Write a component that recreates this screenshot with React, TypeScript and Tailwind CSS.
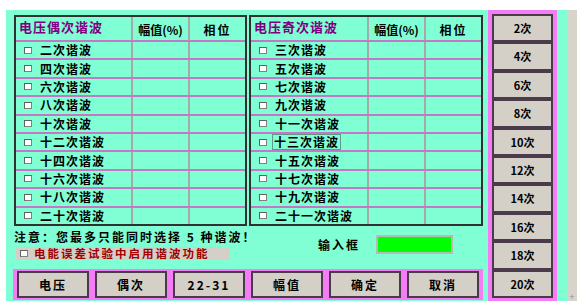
import React from 'react';

const evenRows = ['二次谐波', '四次谐波', '六次谐波', '八次谐波', '十次谐波', '十二次谐波', '十四次谐波', '十六次谐波', '十八次谐波', '二十次谐波'];
const oddRows = ['三次谐波', '五次谐波', '七次谐波', '九次谐波', '十一次谐波', '十三次谐波', '十五次谐波', '十七次谐波', '十九次谐波', '二十一次谐波'];
const sideButtons = ['2次', '4次', '6次', '8次', '10次', '12次', '14次', '16次', '18次', '20次'];
const bottomButtons = ['电压', '偶次', '22-31', '幅值', '确定', '取消'];

const Check = () => (
  <span className="inline-block w-[8px] h-[7px] bg-white border border-[#808080] border-t-[#606060] border-l-[#606060] shrink-0" />
);

const HarmonicTable = ({ title, rows, labelW, valW, focus }: { title: string; rows: string[]; labelW: string; valW: string; focus?: number }) => {
  return (
    <div className="h-[211px] border-2 border-[#303030] grid grid-rows-[23px_repeat(10,1fr)]">
      <div className="flex">
        <div className={`${labelW} pl-[3px] pt-[1px] text-[13px] font-bold text-[#800080] tracking-[1px] leading-[18px]`}>{title}</div>
        <div className={`${valW} border-l-2 border-[#a8a8a8] flex items-center justify-center pt-[3px] text-[12px] font-bold text-black`}>幅值(%)</div>
        <div className="flex-1 border-l-2 border-[#a8a8a8] flex items-center justify-center pt-[3px] text-[12px] font-bold text-black tracking-[2px]">相位</div>
      </div>
      {rows.map((r, i) => (
        <div key={r} className="flex border-t-2 border-[#c478c4]">
          <div className={`${labelW} flex items-center pl-[8px] gap-[8px]`}>
            <Check />
            <span className={`text-[12px] font-bold text-black tracking-[1px] leading-[14px] ${focus === i ? 'outline outline-1 outline-[#5f9a88] px-[1px] -ml-[2px]' : ''}`}>{r}</span>
          </div>
          <div className={`${valW} border-l-2 border-[#a8a8a8]`} />
          <div className="flex-1 border-l-2 border-[#a8a8a8]" />
        </div>
      ))}
    </div>
  );
};

const App = () => {
  return (
    <div className="w-[577px] h-[307px] bg-white flex pt-[10px] pl-[6px] overflow-hidden" style={{ fontFamily: '"Noto Sans CJK SC", "Liberation Sans", sans-serif' }}>
      <div className="w-[561px] h-[291px] bg-[#80ffd4] flex">
        <div className="w-[482px] pt-[5px] pl-[8px] flex flex-col">
          <div className="flex gap-[2px]">
            <div className="w-[233px]">
              <HarmonicTable title="电压偶次谐波" rows={evenRows} labelW="w-[115px]" valW="w-[57px]" />
            </div>
            <div className="w-[234px]">
              <HarmonicTable title="电压奇次谐波" rows={oddRows} labelW="w-[116px]" valW="w-[57px]" focus={5} />
            </div>
          </div>

          <div className="flex items-center mt-[3px]">
            <div className="w-[286px] flex flex-col">
              <div className="text-[12px] font-bold text-black tracking-[2px] leading-[16px] h-[16px] whitespace-nowrap">注意：您最多只能同时选择 5 种谐波！</div>
              <div className="mt-[2px] ml-[2px] w-[214px] h-[13px] bg-[#d4d0c8] flex items-center pl-[4px] gap-[6px]">
                <Check />
                <span className="text-[11.5px] font-bold text-[#a00000] tracking-[2px] leading-[13px] whitespace-nowrap">电能误差试验中启用谐波功能</span>
              </div>
            </div>
            <div className="ml-[18px] text-[12px] font-bold text-black tracking-[2px] leading-[14px]">输入框</div>
            <div className="ml-[16px] w-[77px] h-[19px] bg-[#00ff00] border-2 border-[#b8b8b8]" />
          </div>

          <div className="mt-[9px] -ml-[1px] w-[470px] h-[31px] bg-[#f47cf4] flex gap-[6px] pl-[4px] pt-[2px]">
            {bottomButtons.map(b => (
              <div key={b} className="w-[72px] h-[27px] bg-[#d4d0c8] border-2 border-[#4a3a4a] flex items-center justify-center text-[12px] font-bold text-black tracking-[2px]">{b}</div>
            ))}
          </div>
        </div>

        <div className="w-[69px] h-full bg-[#f47cf4] pl-[4px] pr-[4px] pt-[4px] pb-[3px] flex flex-col">
          {sideButtons.map(b => (
            <div key={b} className="flex-1 bg-[#d4d0c8] border-2 border-[#4a3a4a] flex items-center justify-center text-[11px] font-bold text-black">{b}</div>
          ))}
        </div>
      </div>
      <div className="w-[10px] h-[291px] bg-[#d8d4cc] flex items-end justify-center">
        <span className="text-[9px] text-[#909090] leading-[9px]">+</span>
      </div>
    </div>
  );
};

export default App;
